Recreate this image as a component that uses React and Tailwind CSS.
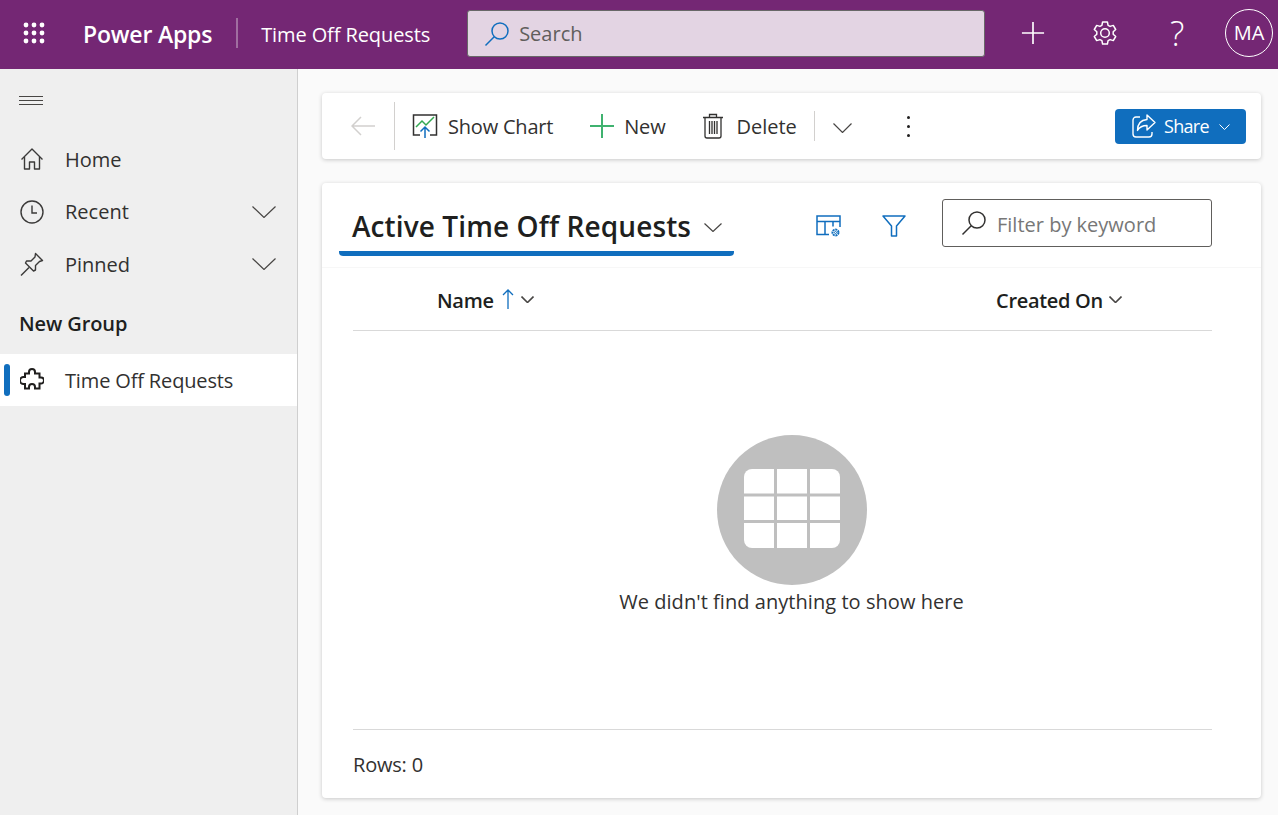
const font = { fontFamily: '"Open Sans", "Noto Sans", sans-serif' };

function Waffle() {
    const dots = [4, 12, 20];
    return (
        <svg width="24" height="24" viewBox="0 0 24 24" fill="#fff">
            {dots.map((y) => dots.map((x) => <circle key={x + '-' + y} cx={x} cy={y} r="2.4" />))}
        </svg>
    );
}

function Chevron({ w, h, sw = 1.2, color = '#484644', className = '' }) {
    return (
        <svg className={className} width={w} height={h} viewBox={`0 0 ${w} ${h}`} fill="none" stroke={color} strokeWidth={sw}>
            <path d={`M0.5 0.5 L${w / 2} ${h - 0.5} L${w - 0.5} 0.5`} />
        </svg>
    );
}

function SearchGlass({ color = '#323130', size = 26 }) {
    return (
        <svg width={size} height={size} viewBox="0 0 26 26" fill="none" stroke={color} strokeWidth="1.5">
            <circle cx="16" cy="10" r="8" />
            <path d="M10.2 15.8 L1.5 24.5" />
        </svg>
    );
}

function Gear() {
    return (
        <svg width="26" height="26" viewBox="0 0 26 26" fill="none" stroke="#fff" strokeWidth="1.5" strokeLinejoin="round">
            <path d="M10.6 2h4.8l.7 3.3 2 1.1 3.2-1 2.4 4.1-2.5 2.3v2.4l2.5 2.3-2.4 4.1-3.2-1-2 1.1-.7 3.3h-4.8l-.7-3.3-2-1.1-3.2 1-2.4-4.1 2.5-2.3v-2.4L2.3 9.5l2.4-4.1 3.2 1 2-1.1z" />
            <circle cx="13" cy="13" r="4.3" />
        </svg>
    );
}

function HomeIcon() {
    return (
        <svg width="24" height="24" viewBox="0 0 24 24" fill="none" stroke="#3b3a39" strokeWidth="1.4" strokeLinejoin="round">
            <path d="M1.5 12.5 L12 2 L22.5 12.5" />
            <path d="M4.5 10 V22 H9.5 V15 H14.5 V22 H19.5 V10" />
        </svg>
    );
}

function ClockIcon() {
    return (
        <svg width="24" height="24" viewBox="0 0 24 24" fill="none" stroke="#3b3a39" strokeWidth="1.4">
            <circle cx="12" cy="12" r="11" />
            <path d="M12 5.5 V13 H17" />
        </svg>
    );
}

function Pin() {
    return (
        <svg width="24" height="24" viewBox="0 0 24 24" fill="none" stroke="#3b3a39" strokeWidth="1.4" strokeLinejoin="round">
            <path d="M15.5 1.5 L22.5 8.5 L19.5 9.5 L15.5 13.5 L15.5 18 L13.5 19 L5.5 11 L6.5 9 L11 9 L15 5 Z" />
            <path d="M9 15.5 L1 23.5" />
        </svg>
    );
}

function Puzzle() {
    return (
        <svg width="24" height="24" viewBox="0 0 24 24" fill="none" stroke="#201f1e" strokeWidth="2" strokeLinejoin="miter">
            <path d="M5 5.5H9V4a3 3 0 0 1 6 0v1.5H19.5V9.5H21a3 3 0 0 1 0 6h-1.5V20.5H15V19a3 3 0 0 0-6 0v1.5H5V16H3.5a3.5 3.5 0 0 1 0-7H5z" />
        </svg>
    );
}

function ChartIcon() {
    return (
        <svg width="27" height="26" viewBox="0 0 27 26" fill="none">
            <path d="M8 22H1.5V2h23v20H18" stroke="#323130" strokeWidth="1.5" />
            <path d="M4 14l6-6 4 4 8-8" stroke="#33a852" strokeWidth="1.5" />
            <path d="M13 25V14M8.5 18.5L13 14l4.5 4.5" stroke="#106ebe" strokeWidth="1.5" />
        </svg>
    );
}

function Trash() {
    return (
        <svg width="22" height="26" viewBox="0 0 22 26" fill="none" stroke="#323130" strokeWidth="1.3">
            <path d="M1 4.5h20M7.5 4.5V1.5h7v3M3 4.5V23a2 2 0 0 0 2 2h12a2 2 0 0 0 2-2V4.5" />
            <path d="M7.5 8v13M10 8v13M12.5 8v13M15 8v13" />
        </svg>
    );
}

function ShareIcon() {
    return (
        <svg width="24" height="24" viewBox="0 0 24 24" fill="none" stroke="#fff" strokeWidth="1.4" strokeLinejoin="round">
            <path d="M8 3H4a3 3 0 0 0-3 3v14a3 3 0 0 0 3 3h13a3 3 0 0 0 3-3v-2" />
            <path d="M15 1l8 7.5-8 7.5v-4.5c-4.5 0-7.5 1.5-9.5 5 0-6.5 3.5-10.5 9.5-11z" />
        </svg>
    );
}

function ViewSettings() {
    return (
        <svg width="25" height="23" viewBox="0 0 25 23" fill="none" stroke="#106ebe" strokeWidth="1.5">
            <path d="M13 19.5H1V1h23v11M1 6.5h23M9 6.5v13M17 6.5v5" />
            <circle cx="19.5" cy="17.5" r="3" strokeWidth="2" strokeDasharray="2 0.7" />
            <circle cx="19.5" cy="17.5" r="1" strokeWidth="1" />
        </svg>
    );
}

function Funnel() {
    return (
        <svg width="24" height="22" viewBox="0 0 24 22" fill="none" stroke="#106ebe" strokeWidth="1.5" strokeLinejoin="round">
            <path d="M1 1h22L14.5 11v10h-5V11z" />
        </svg>
    );
}

function EmptyGrid() {
    const xs = [[27, 57], [60, 90], [93, 123]];
    const ys = [[34, 58.5], [61.5, 85], [88, 113]];
    return (
        <svg width="150" height="150" viewBox="0 0 150 150">
            <circle cx="75" cy="75" r="75" fill="#bfbfbf" />
            <clipPath id="cells"><rect x="27" y="34" width="96" height="79" rx="8" /></clipPath>
            <g clipPath="url(#cells)" fill="#fff">
                {ys.map(([y1, y2]) => xs.map(([x1, x2]) => (
                    <rect key={x1 + '-' + y1} x={x1} y={y1} width={x2 - x1} height={y2 - y1} />
                )))}
            </g>
        </svg>
    );
}

function NavItem({ icon, label, expandable }) {
    return (
        <div className="flex h-[52.5px] items-center pl-5 pr-[21px] text-[20px] text-[#323130]">
            <span className="flex w-[45px] shrink-0">{icon}</span>
            <span className="flex-1 pt-px">{label}</span>
            {expandable && <Chevron w={24} h={12} />}
        </div>
    );
}

export default function App() {
    return (
        <div className="flex h-[815px] w-[1278px] flex-col overflow-hidden bg-[#fafafa]" style={font}>
            {/* Top bar */}
            <header className="flex h-[69px] shrink-0 items-center bg-[#742774] text-white">
                <div className="mb-[3px] ml-[22px] flex w-[61px] shrink-0"><Waffle /></div>
                <span className="text-[23px] font-semibold tracking-[-0.2px]">Power Apps</span>
                <div className="mb-[3px] ml-6 h-[30px] w-[2px] bg-[#a06ea0]" />
                <span className="ml-[23px] w-[206px] text-[20px] tracking-[-0.1px]">Time Off Requests</span>
                <div className="mb-[2px] flex h-[47px] w-[518px] items-center gap-[9px] rounded-[3px] border border-[#686868] bg-[#e3d4e3] pl-4 text-[20px] text-[#605e5c]">
                    <SearchGlass color="#106ebe" />
                    <span className="pt-px">Search</span>
                </div>
                <div className="mb-[3px] ml-[36px] flex w-[24px] justify-center">
                    <svg width="26" height="26" viewBox="0 0 26 26" stroke="#fff" strokeWidth="1.8"><path d="M13 1v24M1 13h24" /></svg>
                </div>
                <div className="mb-[3px] ml-[47px] flex w-[26px]"><Gear /></div>
                <div className="mb-[3px] ml-[46px] flex w-[26px] justify-center text-[34px] font-light leading-none">?</div>
                <div className="mb-[3px] ml-[35px] flex h-[48px] w-[48px] items-center justify-center rounded-full border border-white text-[20px]">MA</div>
            </header>

            <div className="flex flex-1">
                {/* Sidebar */}
                <aside className="w-[298px] shrink-0 border-r border-[#cfcfcf] bg-[#efefef]">
                    <div className="flex pl-[19px] pt-[26px]">
                        <svg width="24" height="12" viewBox="0 0 24 12" stroke="#484644"><path d="M0 1.5h24M0 5.5h24M0 9.5h24" /></svg>
                    </div>
                    <div className="mt-[26px]">
                        <NavItem icon={<HomeIcon />} label="Home" />
                        <NavItem icon={<ClockIcon />} label="Recent" expandable />
                        <NavItem icon={<Pin />} label="Pinned" expandable />
                    </div>
                    <div className="flex h-[63.5px] items-center pl-[19px] pt-1 text-[20px] font-semibold tracking-[-0.1px] text-[#201f1e]">New Group</div>
                    <div className="flex h-[52px] items-center bg-white text-[20px] text-[#323130]">
                        <div className="ml-1 mr-[10px] h-8 w-[6px] rounded-[3px] bg-[#106ebe]" />
                        <span className="flex w-[45px]"><Puzzle /></span>
                        <span className="pt-[2px] tracking-[-0.15px]">Time Off Requests</span>
                    </div>
                </aside>

                {/* Main */}
                <main className="flex flex-1 flex-col gap-6 pl-6 pr-[17px] pt-6">
                    {/* Command bar */}
                    <div className="flex h-[66px] items-center rounded-[4px] bg-white pl-[29px] pr-[15px] text-[20px] text-[#323130] shadow-[0_1px_4px_rgba(0,0,0,0.2)]">
                        <svg width="24" height="20" viewBox="0 0 24 20" fill="none" stroke="#d2d0ce" strokeWidth="1.5"><path d="M24 10H1M10 1l-9 9 9 9" /></svg>
                        <div className="ml-[19px] mr-[17px] h-12 w-px bg-[#d2d0ce]" />
                        <ChartIcon />
                        <span className="ml-[9px] mt-[2px] tracking-[-0.2px]">Show Chart</span>
                        <svg className="ml-[37px]" width="24" height="24" viewBox="0 0 24 24" stroke="#3fb26f" strokeWidth="2"><path d="M12 0v24M0 12h24" /></svg>
                        <span className="ml-[10px] mt-[2px] tracking-[-0.2px]">New</span>
                        <span className="ml-[37px] flex"><Trash /></span>
                        <span className="ml-3 mt-[2px]">Delete</span>
                        <div className="ml-[17px] h-[30px] w-px bg-[#d2d0ce]" />
                        <Chevron className="ml-[18px] mt-1" w={19} h={10} />
                        <div className="ml-[55px] flex flex-col gap-[6px]">
                            <span className="h-[3px] w-[3px] rounded-full bg-[#201f1e]" />
                            <span className="h-[3px] w-[3px] rounded-full bg-[#201f1e]" />
                            <span className="h-[3px] w-[3px] rounded-full bg-[#201f1e]" />
                        </div>
                        <div className="ml-auto flex h-[35px] w-[131px] items-center rounded-[4px] bg-[#106ebe] pl-[17px] text-[18px] text-white">
                            <ShareIcon />
                            <span className="ml-[8px] tracking-[-0.7px]">Share</span>
                            <Chevron className="ml-[10px] mt-[2px]" w={11} h={6} color="#fff" sw={1} />
                        </div>
                    </div>

                    {/* Grid card */}
                    <div className="flex h-[615px] flex-col rounded-[4px] bg-white pl-[31px] pr-[49px] shadow-[0_1px_4px_rgba(0,0,0,0.2)]">
                        <div className="-ml-[31px] -mr-[49px] flex h-[85px] border-b border-[#f7f7f7] pl-[17px]">
                            <div className="mt-[27px] flex h-[46px] w-[395px] items-start rounded-b-[4px] border-b-[5px] border-[#106ebe] pl-[13px]">
                                <span className="-mt-px text-[28px] font-semibold leading-[34px] tracking-[0.1px] text-[#201f1e]">Active Time Off Requests</span>
                                <Chevron className="ml-[13px] mt-[13px]" w={18} h={9} />
                            </div>
                            <div className="ml-[82px] mt-[32px] flex"><ViewSettings /></div>
                            <div className="ml-[41px] mt-[32px] flex"><Funnel /></div>
                            <div className="ml-[36px] mt-4 flex h-12 w-[270px] items-center gap-[9px] rounded-[3px] border border-[#605e5c] pl-[18px] text-[20px] text-[#777]">
                                <SearchGlass />
                                <span className="pl-px pt-[3px]">Filter by keyword</span>
                            </div>
                        </div>
                        <div className="flex h-[63px] shrink-0 items-center border-b border-[#d9d9d9] pt-1 text-[20px] font-semibold text-[#201f1e]">
                            <div className="flex w-[643px] items-center pl-[84px]">
                                <span className="tracking-[-0.3px]">Name</span>
                                <svg className="ml-2 mb-1" width="12" height="20" viewBox="0 0 12 20" fill="none" stroke="#106ebe" strokeWidth="1.3"><path d="M6 20V1M1 6l5-5 5 5" /></svg>
                                <Chevron className="ml-[7px] mb-1" w={13} h={7} sw={1.6} />
                            </div>
                            <span className="tracking-[-0.3px]">Created On</span>
                            <Chevron className="ml-[6px] mb-1" w={13} h={7} sw={1.6} />
                        </div>
                        <div className="flex h-[399px] shrink-0 flex-col items-center border-b border-[#d9d9d9] pl-[18px] pt-[104px] text-[20px] text-[#323130]">
                            <EmptyGrid />
                            <span className="mt-[2px] tracking-[0.05px]">We didn't find anything to show here</span>
                        </div>
                        <div className="flex h-[68px] items-center pt-px text-[20px] tracking-[-0.2px] text-[#323130]">Rows: 0</div>
                    </div>
                </main>
            </div>
        </div>
    );
}
